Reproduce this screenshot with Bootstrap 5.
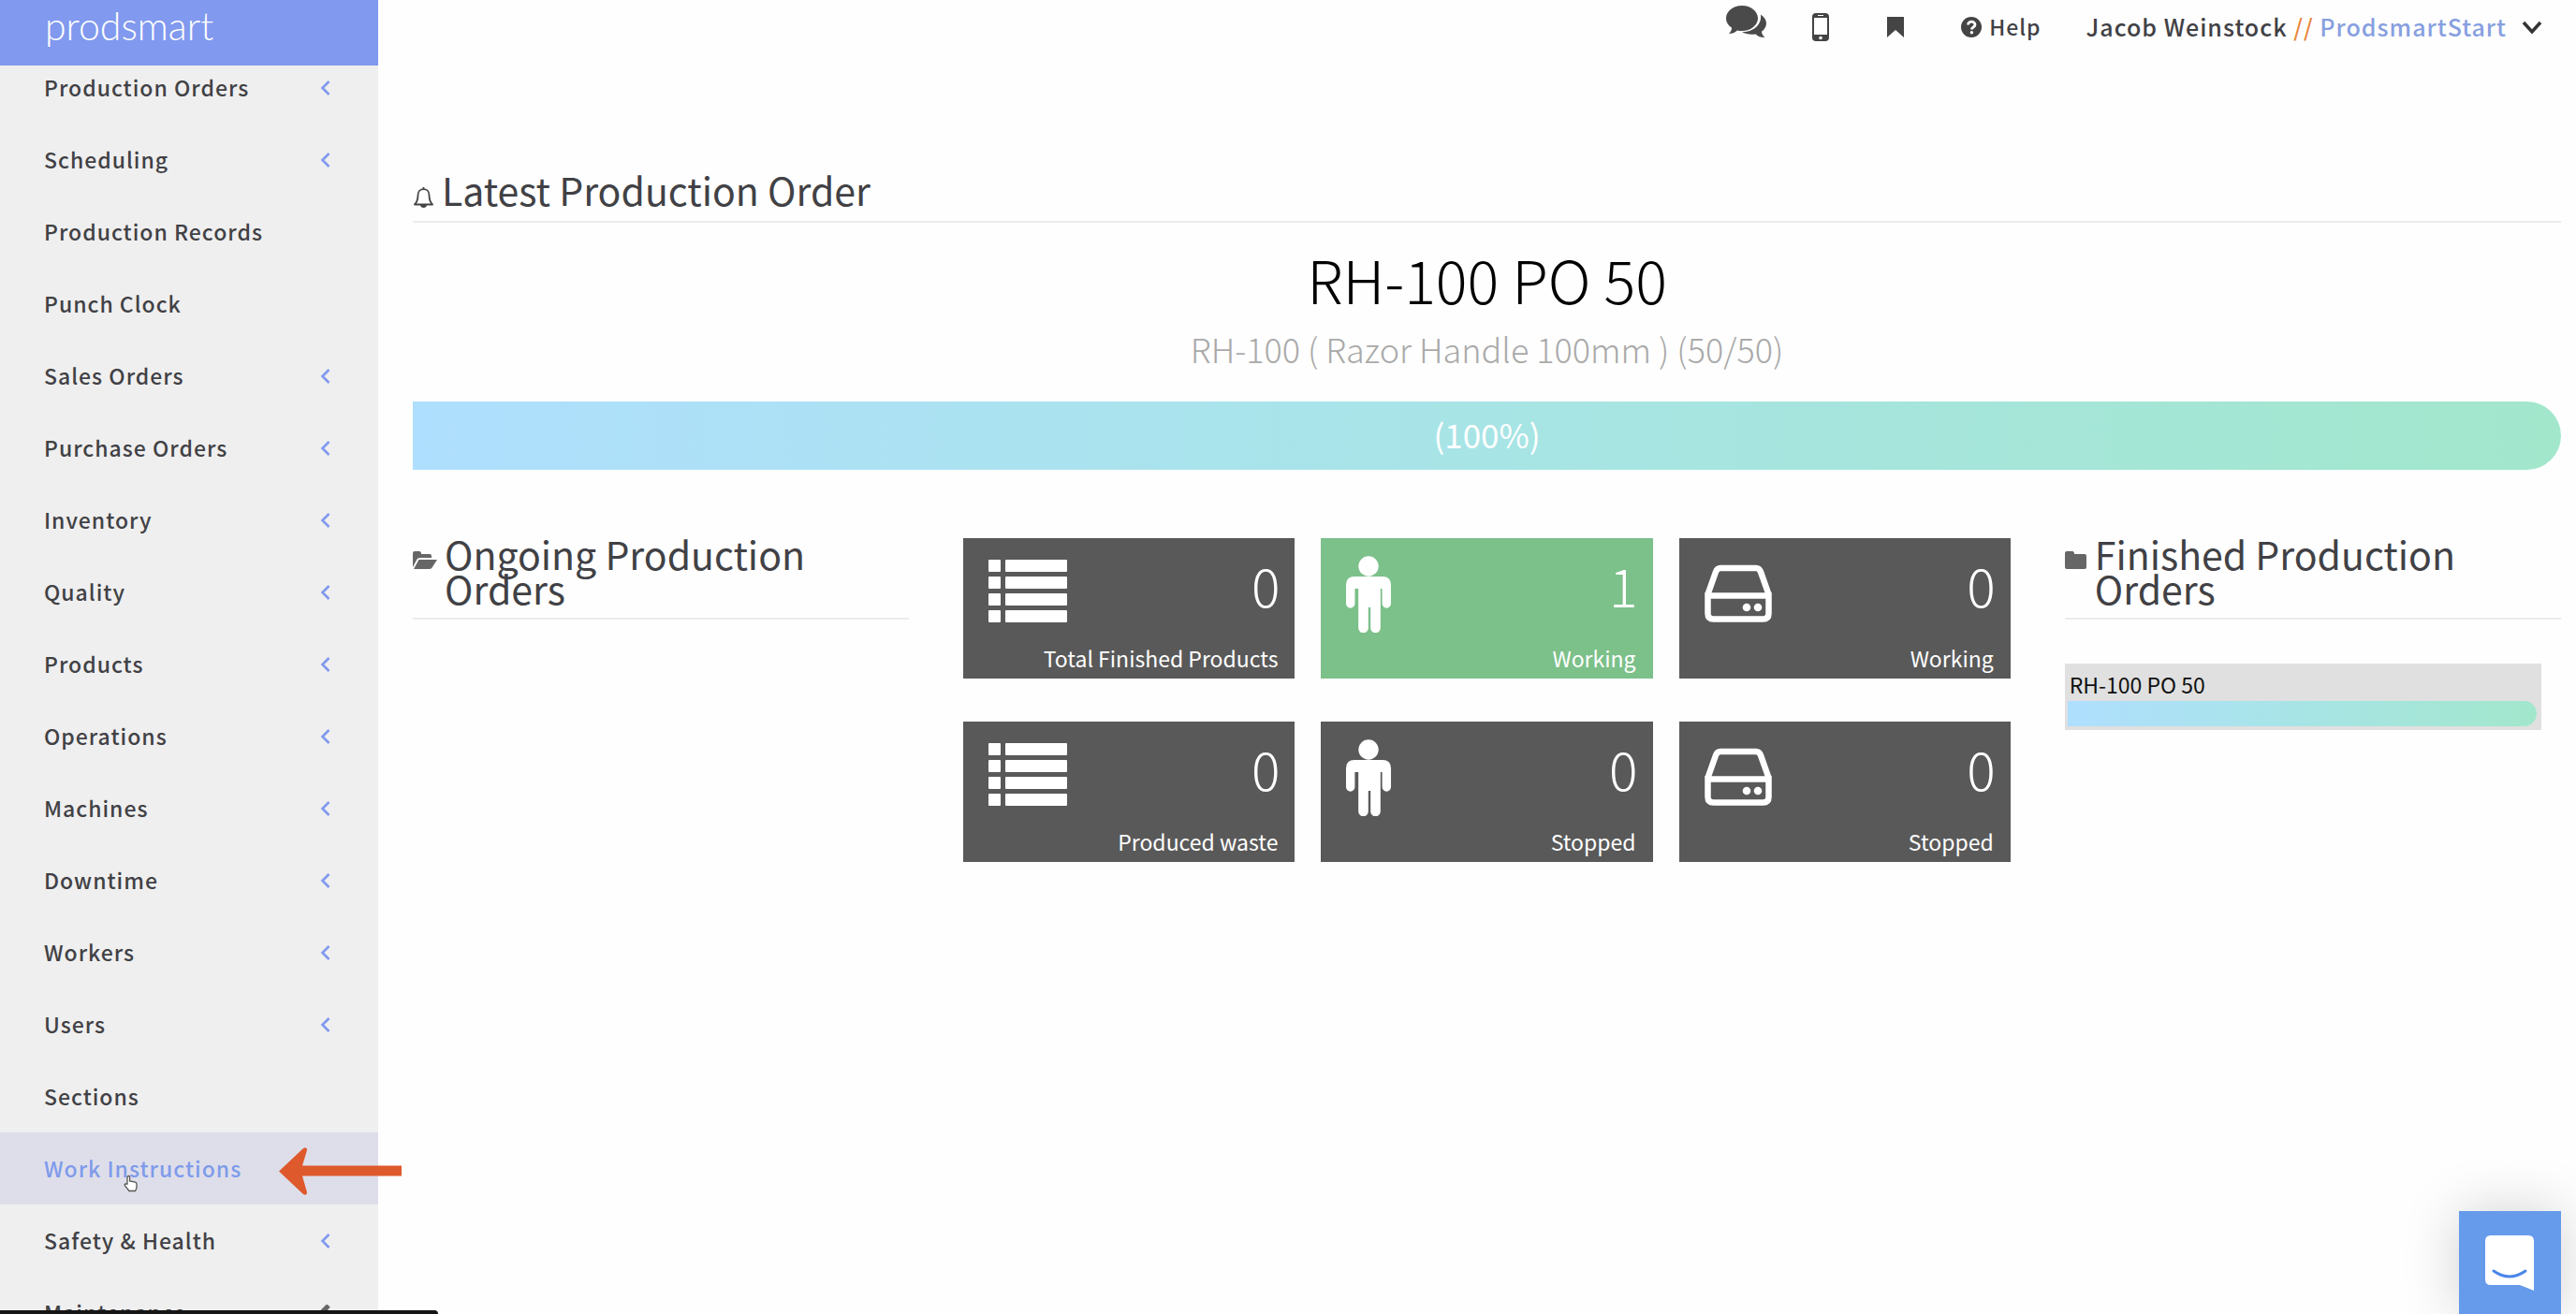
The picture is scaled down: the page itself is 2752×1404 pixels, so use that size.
<!DOCTYPE html>
<html lang="en">
<head>
<meta charset="utf-8">
<meta name="viewport" content="width=device-width, initial-scale=1">
<title>Prodsmart</title>
<link href="https://cdn.jsdelivr.net/npm/bootstrap@5.3.0/dist/css/bootstrap.min.css" rel="stylesheet">
<style>
  body { font-family: "Noto Sans CJK SC", "Noto Sans", sans-serif; font-size: 23px; color: #414145; background: #fefefe; }
  a { color: inherit; text-decoration: none; }
  svg { display: block; flex: none; }

  .side { width: 404px; background: #efefef; }
  .brand-bar { height: 70px; background: #8199ee; color: #fff; font-family: Lato, sans-serif; font-weight: 300; font-size: 41px; line-height: 56px; padding-left: 48px; z-index: 1; }
  .side-list { margin-top: -15px; }
  .side-link { height: 77px; padding: 0 50px 0 47px; font-weight: 500; letter-spacing: 1px; }
  .side-link svg { color: #8199ee; }
  .side-link.current { background: #dedeea; color: #7f9bea; }

  .top-nav { height: 57px; padding-right: 36px; font-weight: 500; letter-spacing: 1px; }
  .top-nav .lift { margin-bottom: 10px; }
  .gap-wide { margin-left: 58px; }
  .gap-mid { margin-left: 48px; }
  .account { font-size: 25px; }
  .slashes { color: #e8853a; }
  .company { color: #879fe0; }

  .board { padding: 127px 16px 0 37px; }
  .head { font-size: 41px; line-height: 37px; font-weight: 400; padding-bottom: 13px; border-bottom: 2px solid #ececec; }
  .head svg { color: #666; margin-top: 15px; }
  .order-name { font-size: 63px; line-height: 64px; font-weight: 300; color: #000; margin: 28px 0 20px; }
  .order-item { font-size: 36px; line-height: 44px; font-weight: 300; color: #a9a9a9; margin-bottom: 35px; }
  .meter { background: linear-gradient(90deg, #afdffe, #a8e4e8 45%, #a2e7cc); }
  .meter-main { height: 73px; border-radius: 0 37px 37px 0; font-size: 35px; line-height: 70px; color: #fff; margin-bottom: 71px; }
  .meter-thin { height: 27px; border-radius: 0 14px 14px 0; }
  .cols { --bs-gutter-x: 58px; }
  .tiles-col { padding-top: 2px; }
  .tiles { --bs-gutter-x: 28px; --bs-gutter-y: 46px; }
  .tile { background: #595959; color: #fff; padding: 19px 18px 7px 27px; }
  .tile.on { background: #7cc08a; }
  .tile-num { font-size: 57px; line-height: 60px; font-weight: 300; margin-right: -2px; }
  .tile-label { line-height: 30px; margin-top: 12px; }
  .done { background: #e0e0e0; color: #111; margin: 47px 21px 0 0; padding: 6px 5px 4px 3px; }
  .done-name { line-height: 32px; padding: 0 0 2px 2px; }

  .chat-btn { width: 109px; height: 110px; right: 16px; bottom: 0; background: #669bec; border: 0; padding: 25px 27px; box-shadow: 0 0 60px rgba(0,0,0,.18); }
  .pointer-arrow { left: 298px; top: 1226px; z-index: 3; }
  .hand { left: 132px; top: 1255px; z-index: 3; }
  .status { left: 0; bottom: 0; width: 468px; height: 4px; background: #151515; border-radius: 0 6px 0 0; z-index: 3; }
</style>
<script src="https://cdn.jsdelivr.net/npm/bootstrap@5.3.0/dist/js/bootstrap.bundle.min.js"></script>
</head>
<body>
<svg class="d-none" aria-hidden="true">
  <symbol id="chev" viewBox="0 0 12 18"><path d="M9.500 2 2.500 9l7 7" fill="none" stroke="currentColor" stroke-width="2.600"/></symbol>
  <symbol id="rows" viewBox="0 0 84 82"><g fill="#fff"><rect y="4" width="13" height="13" rx="1"/><rect x="18" y="4" width="66" height="13" rx="1"/><rect y="22" width="13" height="13" rx="1"/><rect x="18" y="22" width="66" height="13" rx="1"/><rect y="40" width="13" height="13" rx="1"/><rect x="18" y="40" width="66" height="13" rx="1"/><rect y="58" width="13" height="13" rx="1"/><rect x="18" y="58" width="66" height="13" rx="1"/></g></symbol>
  <symbol id="man" viewBox="0 0 48 82"><g fill="#fff"><circle cx="24" cy="11" r="10.700"/><path d="M9 22h30q9 0 9 9v20a4.700 4.700 0 0 1-9.400 0V35h-1.800v42a5.300 5.300 0 0 1-10.600 0V55h-2.400v22a5.300 5.300 0 0 1-10.600 0V35H9.400v16A4.700 4.700 0 0 1 0 51V31q0-9 9-9z"/></g></symbol>
  <symbol id="drive" viewBox="0 0 72 82"><path d="M3.500 39v22.500q0 6 6 6h53q6 0 6-6V39M3.500 41 12 17q1.500-4 5-4h38q3.500 0 5 4l8.500 24" fill="none" stroke="#fff" stroke-width="6.500"/><path d="M4 42.500h64" stroke="#fff" stroke-width="6.500"/><circle cx="45" cy="55" r="4.300" fill="#fff"/><circle cx="57" cy="55" r="4.300" fill="#fff"/></symbol>
</svg>

<div class="d-flex vh-100 overflow-hidden position-relative">
  <aside class="side flex-shrink-0">
    <a href="#" class="brand-bar d-block position-relative">prodsmart</a>
    <nav class="side-list d-flex flex-column" aria-label="Main">
      <a href="#" class="side-link d-flex align-items-center justify-content-between">Production Orders<svg width="12" height="18"><use href="#chev"/></svg></a>
      <a href="#" class="side-link d-flex align-items-center justify-content-between">Scheduling<svg width="12" height="18"><use href="#chev"/></svg></a>
      <a href="#" class="side-link d-flex align-items-center">Production Records</a>
      <a href="#" class="side-link d-flex align-items-center">Punch Clock</a>
      <a href="#" class="side-link d-flex align-items-center justify-content-between">Sales Orders<svg width="12" height="18"><use href="#chev"/></svg></a>
      <a href="#" class="side-link d-flex align-items-center justify-content-between">Purchase Orders<svg width="12" height="18"><use href="#chev"/></svg></a>
      <a href="#" class="side-link d-flex align-items-center justify-content-between">Inventory<svg width="12" height="18"><use href="#chev"/></svg></a>
      <a href="#" class="side-link d-flex align-items-center justify-content-between">Quality<svg width="12" height="18"><use href="#chev"/></svg></a>
      <a href="#" class="side-link d-flex align-items-center justify-content-between">Products<svg width="12" height="18"><use href="#chev"/></svg></a>
      <a href="#" class="side-link d-flex align-items-center justify-content-between">Operations<svg width="12" height="18"><use href="#chev"/></svg></a>
      <a href="#" class="side-link d-flex align-items-center justify-content-between">Machines<svg width="12" height="18"><use href="#chev"/></svg></a>
      <a href="#" class="side-link d-flex align-items-center justify-content-between">Downtime<svg width="12" height="18"><use href="#chev"/></svg></a>
      <a href="#" class="side-link d-flex align-items-center justify-content-between">Workers<svg width="12" height="18"><use href="#chev"/></svg></a>
      <a href="#" class="side-link d-flex align-items-center justify-content-between">Users<svg width="12" height="18"><use href="#chev"/></svg></a>
      <a href="#" class="side-link d-flex align-items-center">Sections</a>
      <a href="#" class="side-link current d-flex align-items-center" aria-current="page">Work Instructions</a>
      <a href="#" class="side-link d-flex align-items-center justify-content-between">Safety &amp; Health<svg width="12" height="18"><use href="#chev"/></svg></a>
      <a href="#" class="side-link d-flex align-items-center justify-content-between">Maintenance<svg width="14" height="18" viewBox="0 0 14 18"><path d="M10 4 4 10l6 6" fill="none" stroke="currentColor" stroke-width="3"/><path d="M11 1 1 11" stroke="#666" stroke-width="5"/></svg></a>
    </nav>
  </aside>

  <main class="flex-grow-1">
    <nav class="top-nav d-flex align-items-center justify-content-end" aria-label="Account">
      <a href="#" class="lift" aria-label="Messages"><svg width="43" height="35" viewBox="0 0 43 35" fill="#4a4a4a"><path d="M17 0c9.400 0 17 6 17 13.500S26.400 27 17 27c-1.700 0-3.400-.2-5-.6C9.500 28.600 6.500 30 3 30c2-2 3-4 3.200-6.200C2.400 21.300 0 17.600 0 13.500 0 6 7.600 0 17 0z"/><path d="M37 9.500c3.700 2.300 6 5.800 6 9.500 0 3.400-1.900 6.500-5 8.700.2 2.300 1.200 4.300 3.500 6.300-4 .2-7.500-1.200-10-3.600-5 .9-10.500.2-14.500-2.400C29 28.500 38.500 20.500 37 9.500z"/></svg></a>
      <a href="#" class="gap-mid" aria-label="Mobile"><svg width="20" height="30" viewBox="0 0 20 30"><rect x="1" y="0" width="18" height="30" rx="4" fill="#444"/><rect x="3" y="5" width="14" height="18" fill="#fff"/><path d="M7 2.500h6" stroke="#fff"/><circle cx="10" cy="26.500" r="1.800" fill="#fff"/></svg></a>
      <a href="#" class="gap-wide" aria-label="Bookmarks"><svg width="24" height="24" viewBox="0 0 24 24"><path d="M3 1h18v22l-9-8-9 8z" fill="#444"/></svg></a>
      <a href="#" class="gap-wide d-flex align-items-center gap-2"><svg width="22" height="22" viewBox="0 0 22 22"><circle cx="11" cy="11" r="11" fill="#444"/><path d="M7.500 8.500c0-4.500 7.500-4.500 7.500 0 0 2.500-3.600 2.500-3.600 5" fill="none" stroke="#fff" stroke-width="2.800"/><circle cx="11.400" cy="16.800" r="1.700" fill="#fff"/></svg>Help</a>
      <a href="#" class="account gap-mid d-flex align-items-center">
        <span>Jacob Weinstock <span class="slashes">//</span> <span class="company">ProdsmartStart</span></span>
        <svg class="ms-3" width="22" height="16" viewBox="0 0 22 16"><path d="m2 3 9 10 9-10" fill="none" stroke="#333" stroke-width="3.500"/></svg>
      </a>
    </nav>

    <div class="board">
      <h2 class="head d-flex gap-2 mb-0"><svg width="23" height="24" viewBox="0 0 23 24"><path d="M11.500 1v2M2 19.500c3-3 3.500-6 3.500-10 0-8.500 12-8.500 12 0 0 4 .5 7 3.500 10z" fill="none" stroke="#444" stroke-width="1.800" stroke-linejoin="round"/><path d="M8 20h7c0 4-7 4-7 0z" fill="#444"/></svg>Latest Production Order</h2>
      <h1 class="order-name text-center">RH-100 PO 50</h1>
      <p class="order-item text-center">RH-100 ( Razor Handle 100mm ) (50/50)</p>
      <div class="meter meter-main text-center" role="progressbar" aria-label="Order progress" aria-valuenow="100" aria-valuemin="0" aria-valuemax="100">(100%)</div>

      <div class="row cols">
        <section class="col-3">
          <h2 class="head d-flex gap-2 mb-0"><svg width="26" height="21" viewBox="0 0 26 21"><path d="M0 18V3q0-2 2-2h5q2 0 2 3h9q2 0 2 2v2H7.500q-2 0-3 1.600z" fill="currentColor"/><path d="M6.500 10H26l-5.500 8.500q-1 1.500-3 1.500H1z" fill="currentColor"/></svg>Ongoing Production Orders</h2>
        </section>
        <section class="col-6 tiles-col">
          <div class="row tiles">
            <div class="col-4"><div class="tile"><div class="d-flex justify-content-between"><svg width="84" height="82"><use href="#rows"/></svg><div class="tile-num">0</div></div><div class="tile-label text-end">Total Finished Products</div></div></div>
            <div class="col-4"><div class="tile on"><div class="d-flex justify-content-between"><svg width="48" height="82"><use href="#man"/></svg><div class="tile-num">1</div></div><div class="tile-label text-end">Working</div></div></div>
            <div class="col-4"><div class="tile"><div class="d-flex justify-content-between"><svg width="72" height="82"><use href="#drive"/></svg><div class="tile-num">0</div></div><div class="tile-label text-end">Working</div></div></div>
            <div class="col-4"><div class="tile"><div class="d-flex justify-content-between"><svg width="84" height="82"><use href="#rows"/></svg><div class="tile-num">0</div></div><div class="tile-label text-end">Produced waste</div></div></div>
            <div class="col-4"><div class="tile"><div class="d-flex justify-content-between"><svg width="48" height="82"><use href="#man"/></svg><div class="tile-num">0</div></div><div class="tile-label text-end">Stopped</div></div></div>
            <div class="col-4"><div class="tile"><div class="d-flex justify-content-between"><svg width="72" height="82"><use href="#drive"/></svg><div class="tile-num">0</div></div><div class="tile-label text-end">Stopped</div></div></div>
          </div>
        </section>
        <section class="col-3">
          <h2 class="head d-flex gap-2 mb-0"><svg width="24" height="21" viewBox="0 0 24 21"><path d="M0 18V3q0-2 2-2h6q2 0 2 3h11q2 0 2 2v12q0 2-2 2H2q-2 0-2-2z" fill="currentColor"/></svg>Finished Production Orders</h2>
          <div class="done">
            <div class="done-name">RH-100 PO 50</div>
            <div class="meter meter-thin" role="progressbar" aria-label="RH-100 PO 50 progress" aria-valuenow="100" aria-valuemin="0" aria-valuemax="100"></div>
          </div>
        </section>
      </div>
    </div>
  </main>

  <svg class="pointer-arrow position-absolute" width="131" height="51" viewBox="0 0 131 51"><path d="M0 25.500 26 1q4-2 4 2l-5 16.500h106v11H25L30 48q0 4-4 2z" fill="#de592c"/></svg>
  <svg class="hand position-absolute" width="15" height="19" viewBox="0 0 15 19"><path d="M4 10V2.500q1.300-2 2.600 0V7l6 1.200q1.400.4 1.400 2V13q0 2-1.500 4.500H6L1.500 12q-.8-2 .8-2z" fill="#fff" stroke="#555" stroke-width="1.300"/></svg>
  <div class="status position-absolute"></div>
  <button type="button" class="chat-btn position-absolute" aria-label="Open chat"><svg width="54" height="60" viewBox="0 0 54 60"><path d="M7 1h40q6 0 6 6v53l-15-6H7q-6 0-6-6V7q0-6 6-6z" fill="#fff"/><path d="M10 39q17 12 34 0" fill="none" stroke="#4a86e8" stroke-width="3" stroke-linecap="round"/></svg></button>
</div>
</body>
</html>
